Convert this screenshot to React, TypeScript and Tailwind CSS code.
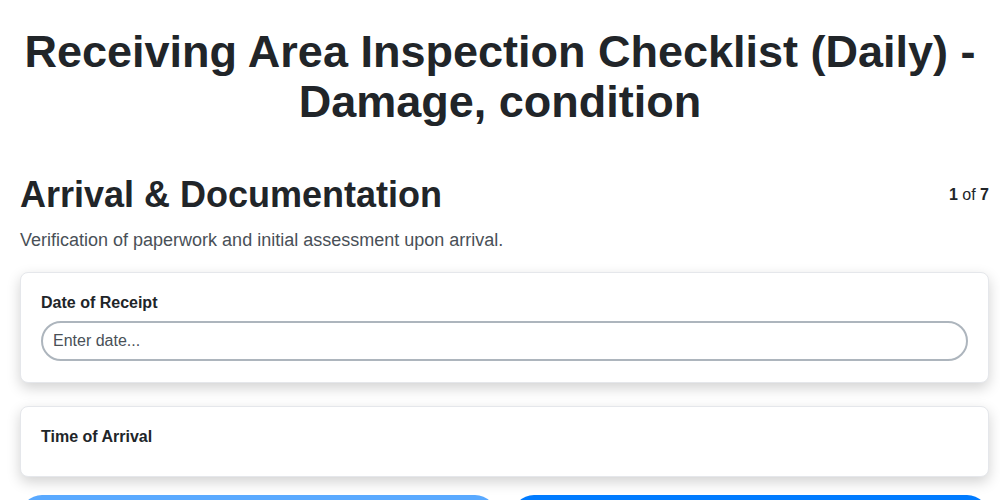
import React from "react";

export default function App() {
  return (
    <div className="min-h-screen bg-white text-[#212529] font-['Liberation_Sans',Arial,sans-serif]">
      <div className="px-5 pt-[27px]">
        <h1 className="text-center text-[45px] leading-[50px] font-bold">
          Receiving Area Inspection Checklist (Daily) - Damage, condition
        </h1>
      </div>

      <div className="pl-5 pr-[11px]">
        <div className="mt-[47px] flex items-center justify-between">
          <h2 className="text-[36px] leading-[42px] font-bold">Arrival &amp; Documentation</h2>
          <div className="text-base">
            <span className="font-bold">1</span> of <span className="font-bold">7</span>
          </div>
        </div>
        <p className="mt-[12px] text-[18px] leading-6 text-[#495057]">
          Verification of paperwork and initial assessment upon arrival.
        </p>

        <div className="mt-[20px] flex flex-col gap-[23px]">
          <div className="rounded-lg border border-[#e5e7eb] bg-white px-5 pt-5 pb-[21px] shadow-[0_5px_14px_rgba(0,0,0,0.18)]">
            <label className="block text-base leading-5 font-bold mb-2">Date of Receipt</label>
            <input
              type="text"
              placeholder="Enter date..."
              className="w-full h-10 rounded-full border-2 border-[#adb5bd] px-[10px] text-base text-[#212529] placeholder:text-[#495057] outline-none"
            />
          </div>

          <div className="rounded-lg border border-[#e5e7eb] bg-white px-5 pt-5 pb-[29px] shadow-[0_5px_14px_rgba(0,0,0,0.18)]">
            <label className="block text-base leading-5 font-bold">Time of Arrival</label>
          </div>
        </div>

        <div className="mt-[18px] grid grid-cols-2 gap-[15px]">
          <button className="h-11 rounded-full bg-[#59a9ff] text-white font-bold">Previous</button>
          <button className="h-11 rounded-full bg-[#007bff] text-white font-bold">Next</button>
        </div>
      </div>
    </div>
  );
}
